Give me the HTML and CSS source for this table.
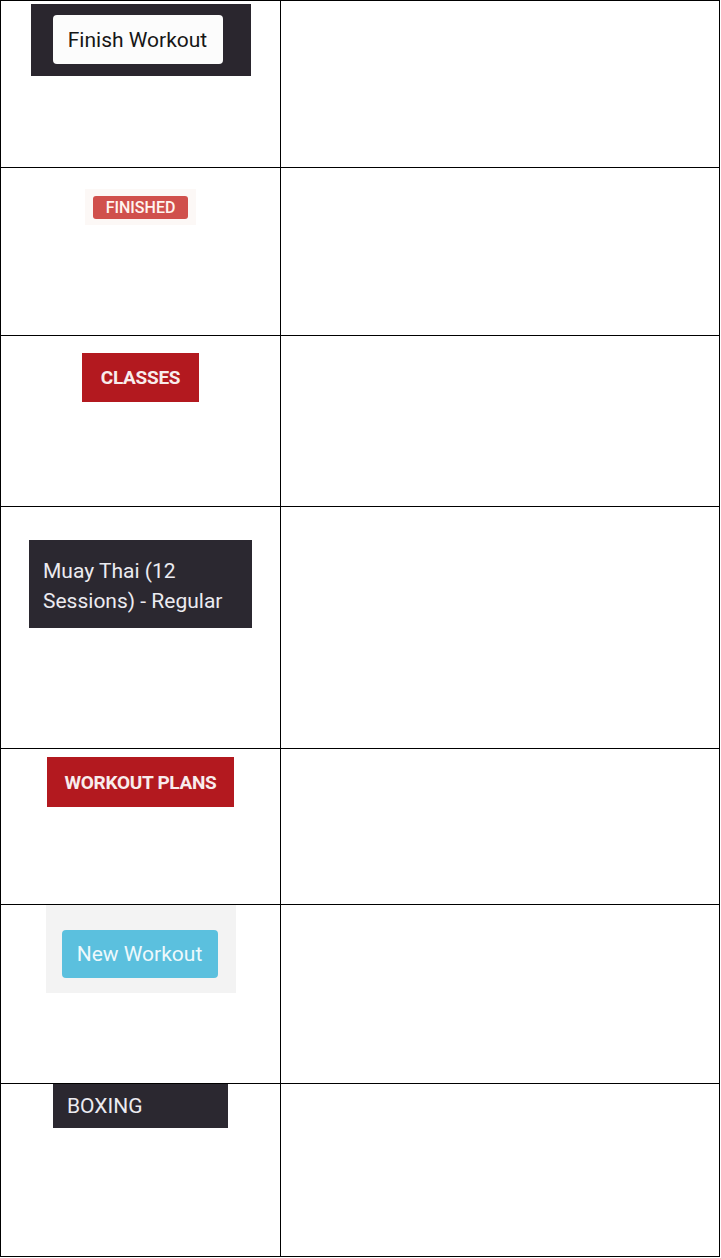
FILE: index.html
```html
<!DOCTYPE html>
<html lang="en">
<head>
<meta charset="utf-8">
<title>UI elements</title>
<link rel="stylesheet" href="styles.css">
</head>
<body>
<div class="sheet">
  <div class="row row-1">
    <div class="media pad-1">
      <div class="frame frame-finish">
        <span class="btn-white">Finish Workout</span>
      </div>
    </div>
    <div class="note"></div>
  </div>
  <div class="row row-2">
    <div class="media pad-2">
      <div class="frame frame-badge">
        <span class="badge">FINISHED</span>
      </div>
    </div>
    <div class="note"></div>
  </div>
  <div class="row row-3">
    <div class="media pad-3">
      <div class="red-label red-classes">CLASSES</div>
    </div>
    <div class="note"></div>
  </div>
  <div class="row row-4">
    <div class="media pad-4">
      <div class="dark-label dark-muay">Muay Thai (12<br>Sessions) - Regular</div>
    </div>
    <div class="note"></div>
  </div>
  <div class="row row-5">
    <div class="media pad-5">
      <div class="red-label red-plans">WORKOUT PLANS</div>
    </div>
    <div class="note"></div>
  </div>
  <div class="row row-6">
    <div class="media pad-6">
      <div class="frame frame-new">
        <span class="btn-blue">New Workout</span>
      </div>
    </div>
    <div class="note"></div>
  </div>
  <div class="row row-7">
    <div class="media pad-7">
      <div class="dark-label dark-boxing">BOXING</div>
    </div>
    <div class="note"></div>
  </div>
</div>
</body>
</html>
```
FILE: styles.css
```css
html, body {
  margin: 0;
  padding: 0;
  background: #ffffff;
}

body {
  font-family: Roboto, "Liberation Sans", Arial, sans-serif;
}

.sheet {
  width: 720px;
  box-sizing: border-box;
  border-top: 1px solid #000;
  border-left: 1px solid #000;
  border-right: 1px solid #000;
}

.row {
  display: grid;
  grid-template-columns: 280px 1fr;
  box-sizing: border-box;
  border-bottom: 1px solid #000;
}

.row-1 { height: 167px; }
.row-2 { height: 168px; }
.row-3 { height: 171px; }
.row-4 { height: 242px; }
.row-5 { height: 156px; }
.row-6 { height: 179px; }
.row-7 { height: 173px; }

.media {
  box-sizing: border-box;
  border-right: 1px solid #000;
  display: flex;
  flex-direction: column;
  align-items: center;
}

.pad-1 { padding-top: 3px; }
.pad-2 { padding-top: 21px; }
.pad-3 { padding-top: 17px; }
.pad-4 { padding-top: 33px; }
.pad-5 { padding-top: 8px; }
.pad-6 { padding-top: 0; }
.pad-7 { padding-top: 0; }

.note {
  min-width: 0;
}

/* Finish Workout */
.frame {
  box-sizing: border-box;
  display: flex;
  align-items: flex-start;
}

.frame-finish {
  width: 220px;
  height: 72px;
  background: #2a262e;
  padding: 11px 0 0 22px;
}

.btn-white {
  box-sizing: border-box;
  width: 170px;
  height: 49px;
  background: #fcfcfc;
  border-radius: 4px;
  color: #161616;
  font-size: 21px;
  display: flex;
  align-items: center;
  justify-content: center;
}

/* FINISHED badge */
.frame-badge {
  width: 111px;
  height: 36px;
  background: #fcf8f6;
  justify-content: center;
  padding-top: 7px;
}

.badge {
  box-sizing: border-box;
  width: 95px;
  height: 23px;
  background: #d0504c;
  border-radius: 3px;
  color: #fff4ef;
  font-size: 16px;
  font-weight: 500;
  display: flex;
  align-items: center;
  justify-content: center;
}

/* red labels */
.red-label {
  box-sizing: border-box;
  background: #b3191f;
  color: #f8ecec;
  font-weight: 700;
  font-size: 19px;
  letter-spacing: -0.3px;
  display: flex;
  align-items: center;
  justify-content: center;
}

.red-classes {
  width: 117px;
  height: 49px;
}

.red-plans {
  width: 187px;
  height: 50px;
}

/* dark labels */
.dark-label {
  box-sizing: border-box;
  background: #2b2830;
  color: #ebebf0;
  font-size: 21px;
}

.dark-muay {
  width: 223px;
  height: 88px;
  padding: 16px 0 0 14px;
  line-height: 30px;
}

.dark-boxing {
  width: 175px;
  height: 44px;
  padding-left: 14px;
  display: flex;
  align-items: center;
}

/* New Workout */
.frame-new {
  width: 190px;
  height: 88px;
  background: #f3f3f3;
  padding: 25px 0 0 16px;
}

.btn-blue {
  box-sizing: border-box;
  width: 156px;
  height: 48px;
  background: #5bc0de;
  border-radius: 4px;
  color: #eef9fc;
  font-size: 21px;
  display: flex;
  align-items: center;
  justify-content: center;
}
```
